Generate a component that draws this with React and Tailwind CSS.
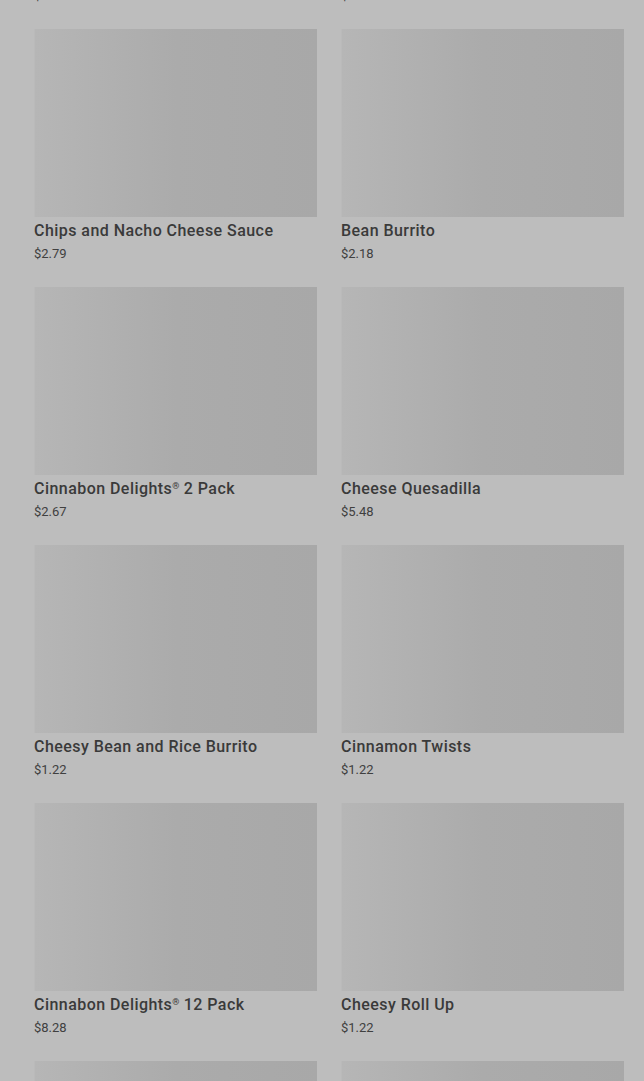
const products = [
  { name: "Crunchy Taco", price: "$1.89" },
  { name: "Soft Taco", price: "$1.89" },
  { name: "Chips and Nacho Cheese Sauce", price: "$2.79" },
  { name: "Bean Burrito", price: "$2.18" },
  { name: "Cinnabon Delights", reg: true, suffix: " 2 Pack", price: "$2.67" },
  { name: "Cheese Quesadilla", price: "$5.48" },
  { name: "Cheesy Bean and Rice Burrito", price: "$1.22" },
  { name: "Cinnamon Twists", price: "$1.22" },
  { name: "Cinnabon Delights", reg: true, suffix: " 12 Pack", price: "$8.28" },
  { name: "Cheesy Roll Up", price: "$1.22" },
  { name: "Nachos BellGrande", reg: true, suffix: "", price: "$6.09" },
  { name: "Chicken Quesadilla", price: "$6.49" },
];

function ProductCard({ name, reg, suffix, price }) {
  return (
    <div className="flex flex-col">
      <div className="h-[188px] w-full border-l border-[#bababa] bg-gradient-to-r from-[#b6b6b6] via-[#ababab] to-[#a8a8a8]" />
      <div className="mt-[2px] h-[24px] text-[16px] font-medium leading-[24px] tracking-[0.45px] text-[#3a3a3a]">
        {name}
        {reg && (
          <span className="relative -top-[5px] text-[9px] leading-none tracking-normal">®</span>
        )}
        {suffix}
      </div>
      <div className="mt-[1px] text-[13px] leading-[20px] text-[#404040]">{price}</div>
    </div>
  );
}

export default function App() {
  return (
    <div
      className="h-[1081px] w-full overflow-hidden bg-[#bdbdbd]"
      style={{ fontFamily: "Roboto, 'Liberation Sans', sans-serif" }}
    >
      <div className="-mt-[229px] grid grid-cols-2 gap-x-6 gap-y-[23px] pl-[34px] pr-[20px]">
        {products.map((p, i) => (
          <ProductCard key={i} {...p} />
        ))}
      </div>
    </div>
  );
}
